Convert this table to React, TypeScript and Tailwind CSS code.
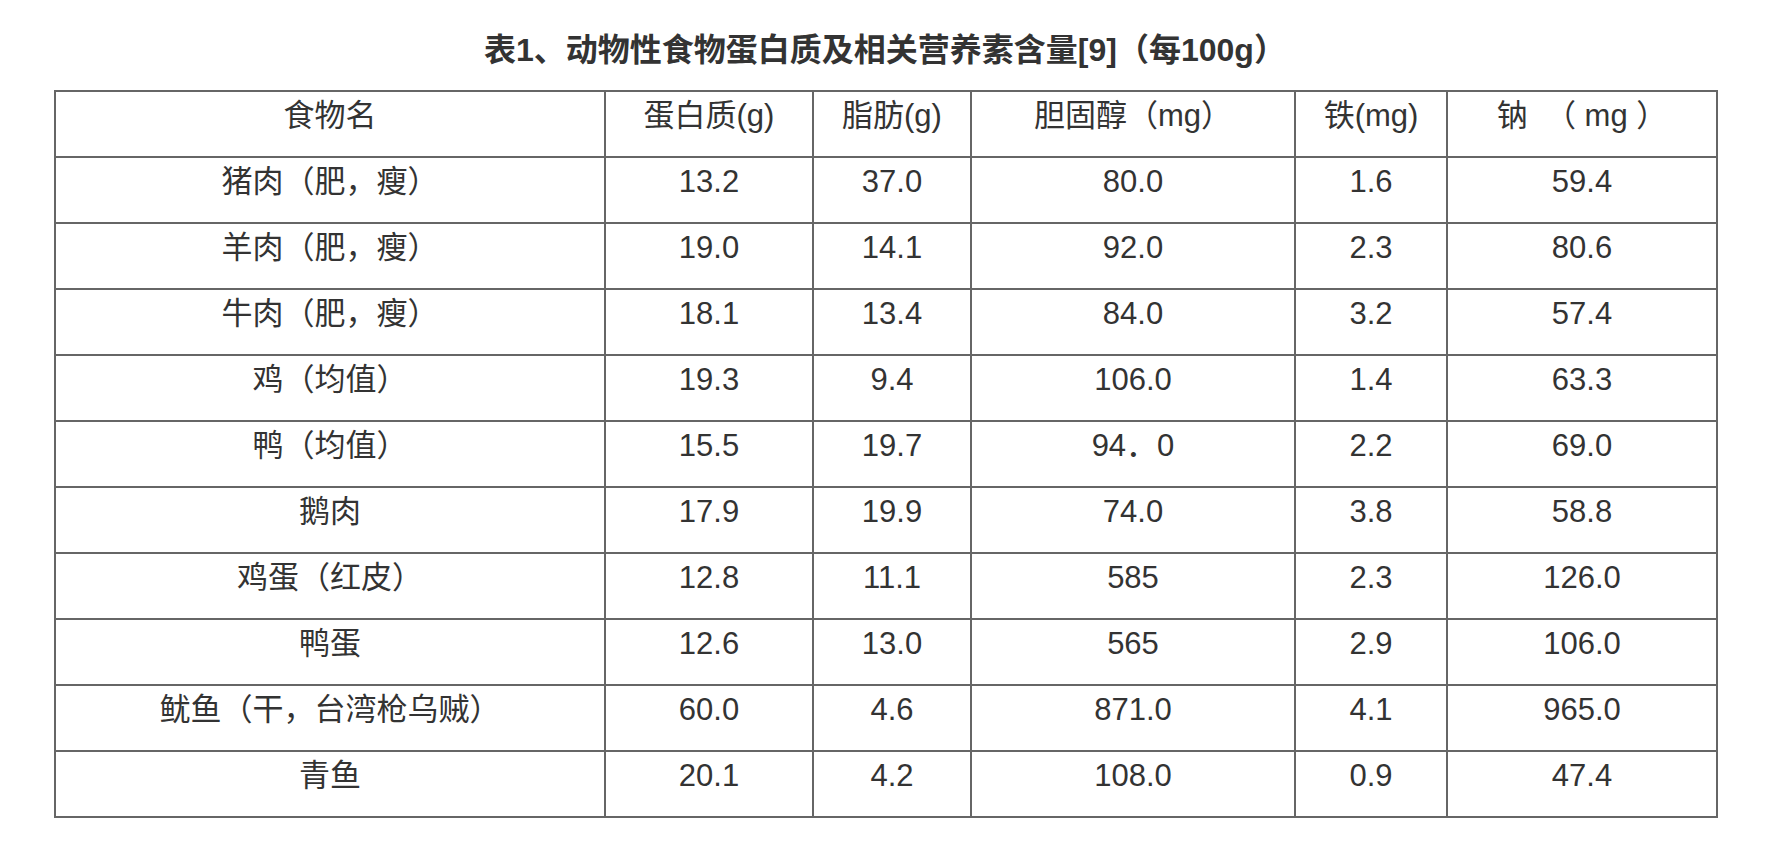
import React from "react";

const headers = ["食物名", "蛋白质(g)", "脂肪(g)", "胆固醇（mg）", "铁(mg)", "钠\u00a0\u00a0（ mg ）"];

const rows: string[][] = [
  ["猪肉（肥，瘦）", "13.2", "37.0", "80.0", "1.6", "59.4"],
  ["羊肉（肥，瘦）", "19.0", "14.1", "92.0", "2.3", "80.6"],
  ["牛肉（肥，瘦）", "18.1", "13.4", "84.0", "3.2", "57.4"],
  ["鸡（均值）", "19.3", "9.4", "106.0", "1.4", "63.3"],
  ["鸭（均值）", "15.5", "19.7", "94．0", "2.2", "69.0"],
  ["鹅肉", "17.9", "19.9", "74.0", "3.8", "58.8"],
  ["鸡蛋（红皮）", "12.8", "11.1", "585", "2.3", "126.0"],
  ["鸭蛋", "12.6", "13.0", "565", "2.9", "106.0"],
  ["鱿鱼（干，台湾枪乌贼）", "60.0", "4.6", "871.0", "4.1", "965.0"],
  ["青鱼", "20.1", "4.2", "108.0", "0.9", "47.4"],
];

export default function App() {
  const font = { fontFamily: '"Liberation Sans", "Noto Sans CJK SC", sans-serif' };
  return (
    <div className="min-h-[852px] w-full bg-white text-[#333333]" style={font}>
      <div className="ml-[54px] w-[1662px] pt-[32px]">
        <div className="text-center text-[32px] leading-[36px] font-bold">
          表1、动物性食物蛋白质及相关营养素含量[9]（每100g）
        </div>
        <table className="mt-[22px] w-[1662px] table-fixed border-collapse border-2 border-[#666666] text-[31px] leading-[36px]">
          <colgroup>
            <col className="w-[550px]" />
            <col className="w-[208px]" />
            <col className="w-[158px]" />
            <col className="w-[324px]" />
            <col className="w-[152px]" />
            <col className="w-[270px]" />
          </colgroup>
          <thead>
            <tr className="h-[66px]">
              {headers.map((h, i) => (
                <th
                  key={i}
                  className="border-2 border-[#666666] p-0 pt-[6px] align-top text-center font-normal whitespace-nowrap"
                >
                  {h}
                </th>
              ))}
            </tr>
          </thead>
          <tbody>
            {rows.map((r, ri) => (
              <tr key={ri} className="h-[66px]">
                {r.map((c, ci) => (
                  <td
                    key={ci}
                    className="border-2 border-[#666666] p-0 pt-[6px] align-top text-center whitespace-nowrap"
                  >
                    {c}
                  </td>
                ))}
              </tr>
            ))}
          </tbody>
        </table>
      </div>
    </div>
  );
}
